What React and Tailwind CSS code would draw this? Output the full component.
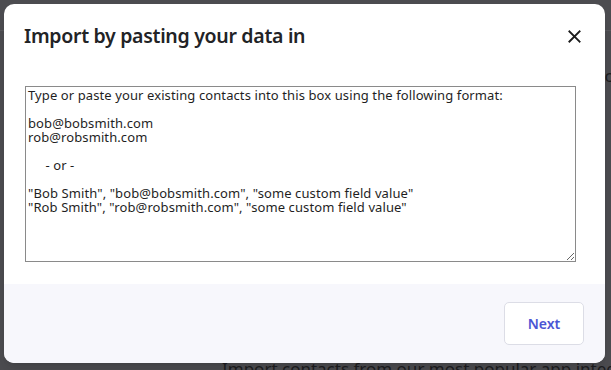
import React from "react";

const sample = `Type or paste your existing contacts into this box using the following format:

bob@bobsmith.com
rob@robsmith.com

     - or -

"Bob Smith", "bob@bobsmith.com", "some custom field value"
"Rob Smith", "rob@robsmith.com", "some custom field value"`;

const App = () => {
  return (
    <div className="relative w-[611px] h-[370px] overflow-hidden bg-[#4c4c50] font-['Noto_Sans',sans-serif]">
      {/* Page behind the overlay */}
      <div className="h-[31px] border-b border-[#58585c]" />
      <div className="flex justify-end pt-[32px]">
        <span className="text-[17px] text-[#1d1d20] -mr-[12px]">co</span>
      </div>
      <div className="absolute left-[222px] top-[356px] text-[17px] whitespace-nowrap text-[#1d1d20]">
        Import contacts from our most popular app integrations
      </div>

      {/* Modal */}
      <div className="absolute left-[4px] top-[4px] w-[601px] h-[359px] bg-white rounded-[10px] overflow-hidden flex flex-col shadow-lg">
        <div className="flex items-center justify-between pl-[20px] pr-[24px] h-[64px]">
          <h2 className="text-[19.5px] font-semibold text-[#222326] tracking-[-0.3px]">
            Import by pasting your data in
          </h2>
          <button className="w-[14px] h-[14px] flex items-center justify-center text-[#1b1b1b]">
            <svg viewBox="0 0 14 14" className="w-[13px] h-[13px]" fill="none" stroke="currentColor" strokeWidth="2" strokeLinecap="square">
              <path d="M1.5 1.5l11 11M12.5 1.5l-11 11" />
            </svg>
          </button>
        </div>

        <div className="pl-[21px] pt-[18px] flex-1">
          <textarea
            className="w-[551px] h-[176px] border border-[#8a8a8a] px-[2px] py-[1px] text-[13px] leading-[14px] text-[#1f1f1f] resize-y outline-none font-['Noto_Sans',sans-serif] tracking-[0.1px]"
            defaultValue={sample}
          />
        </div>

        <div className="h-[79px] bg-[#f7f7fc] flex items-center justify-end pr-[21px]">
          <button className="w-[80px] h-[43px] bg-white border border-[#dcdde6] rounded-[5px] text-[14px] font-semibold text-[#4a55d4]">
            Next
          </button>
        </div>
      </div>
    </div>
  );
};

export default App;
